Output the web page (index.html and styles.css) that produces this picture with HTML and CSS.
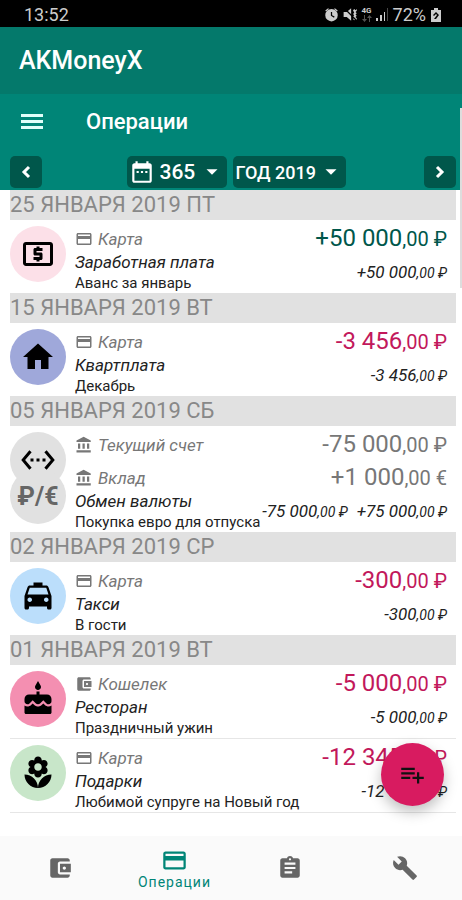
FILE: index.html
```html
<!DOCTYPE html>
<html lang="ru">
<head>
    <meta charset="UTF-8">
    <meta name="viewport" content="width=device-width, initial-scale=1.0">
    <title>AKMoneyX - Операции</title>
    <link rel="stylesheet" href="styles.css">
</head>
<body>
    <!-- общие иконки -->
    <svg class="sprite" aria-hidden="true">
        <symbol id="card" viewBox="0 0 24 24"><path d="M20 4H4c-1.11 0-1.99.89-1.99 2L2 18c0 1.11.89 2 2 2h16c1.11 0 2-.89 2-2V6c0-1.11-.89-2-2-2zm0 14H4v-6h16v6zm0-10H4V6h16v2z"/></symbol>
        <symbol id="bank" viewBox="0 0 24 24"><path d="M4 10v7h3v-7H4zm6 0v7h3v-7h-3zM2 22h19v-3H2v3zm14-12v7h3v-7h-3zm-4.500-9L2 6v2h19V6l-9.500-5z"/></symbol>
        <symbol id="wallet" viewBox="0 0 24 24"><path d="M21 18v1c0 1.100-.9 2-2 2H5c-1.110 0-2-.9-2-2V5c0-1.100.89-2 2-2h14c1.100 0 2 .9 2 2v1h-9c-1.110 0-2 .9-2 2v8c0 1.100.89 2 2 2h9zm-9-2h10V8H12v8zm4-2.500c-.83 0-1.500-.67-1.500-1.500s.67-1.500 1.500-1.500 1.500.67 1.500 1.500-.67 1.500-1.500 1.500z"/></symbol>
        <symbol id="caret" viewBox="0 0 24 24"><path d="M6 9l6 6 6-6z"/></symbol>
    </svg>

    <div class="app">
        <div class="status-bar">
            <span class="clock">13:52</span>
            <div class="status-icons">
                <svg width="15" height="15" viewBox="0 0 24 24"><path d="M22 5.720l-4.600-3.860-1.290 1.530 4.600 3.860L22 5.720zM7.880 3.390L6.600 1.860 2 5.710l1.290 1.530 4.590-3.850z"/><path fill-rule="evenodd" d="M12 3a10 10 0 1 0 0 20 10 10 0 0 0 0-20zm-1 5h2v5l4 2-1 2-5-3z"/></svg>
                <svg width="15" height="15" viewBox="0 0 24 24"><path d="M1 8h5l7-6v20l-7-6H1z"/><path d="M16 5l2-2 2 2 2-2v3l-2 2 2 2-2 2 2 2-2 2 2 2v3l-2-2-2 2-2-2 2-2-2-2 2-2-2-2 2-2z"/><path d="M2 2l20 20" stroke="#000" stroke-width="2"/></svg>
                <span class="network"><b>4G</b><svg width="10" height="7" viewBox="0 0 10 7"><path d="M2 0h1v4h2L2.500 7 0 4h2zM7 7h1V3h2L7.500 0 5 3h2z" opacity=".4"/></svg></span>
                <svg width="13" height="13" viewBox="0 0 13 13"><path d="M0 10h2v3H0zM4 7h2v6H4zM8 4h1v9H8z"/><path d="M11 0h1v13h-1z" opacity=".35"/></svg>
                <span>72%</span>
                <svg width="12" height="14" viewBox="0 0 12 14"><path fill-rule="evenodd" d="M4 0h4v2h3v12H1V2h3zM6 4L3 7l1 1 2-2 1 1-3 4h2l3-4z"/></svg>
            </div>
        </div>

        <header class="app-header">
            <h1>AKMoneyX</h1>
        </header>

        <div class="toolbar">
            <div class="toolbar-title">
                <button class="icon-button" type="button" aria-label="Меню">
                    <svg width="22" height="16" viewBox="0 0 22 16"><path d="M0 0h22v3H0zM0 6h22v3H0zM0 12h22v3H0z"/></svg>
                </button>
                <h2>Операции</h2>
            </div>
            <div class="period">
                <button class="period-button" type="button" aria-label="Назад">
                    <svg width="24" height="24" viewBox="0 0 24 24"><path d="M15 7l-5 5 5 5" fill="none" stroke="#fff" stroke-width="3"/></svg>
                </button>
                <div class="pickers">
                    <label class="picker">
                        <svg width="26" height="26" viewBox="0 0 24 24"><path d="M9 11H7v2h2v-2zm4 0h-2v2h2v-2zm4 0h-2v2h2v-2zm2-7h-1V2h-2v2H8V2H6v2H5c-1.110 0-1.990.9-1.990 2L3 20c0 1.100.89 2 2 2h14c1.100 0 2-.9 2-2V6c0-1.100-.9-2-2-2zm0 16H5V9h14v11z"/></svg>
                        <select class="days" aria-label="Количество дней">
                            <option>365</option>
                        </select>
                        <svg class="caret" width="22" height="22"><use href="#caret"/></svg>
                    </label>
                    <label class="picker">
                        <select class="year" aria-label="Период">
                            <option>ГОД 2019</option>
                        </select>
                        <svg class="caret" width="22" height="22"><use href="#caret"/></svg>
                    </label>
                </div>
                <button class="period-button" type="button" aria-label="Вперед">
                    <svg width="24" height="24" viewBox="0 0 24 24"><path d="M9 7l5 5-5 5" fill="none" stroke="#fff" stroke-width="3"/></svg>
                </button>
            </div>
        </div>

        <main class="operations">
            <h3 class="date">25 ЯНВАРЯ 2019 ПТ</h3>
            <article class="operation">
                <div class="category-icon salary">
                    <svg width="36" height="36" viewBox="0 0 24 24"><path d="M11 17h2v-1h1c.55 0 1-.45 1-1v-3c0-.55-.45-1-1-1h-3v-1h4V8h-2V7h-2v1h-1c-.55 0-1 .45-1 1v3c0 .55.45 1 1 1h3v1H9v2h2v1zm9-13H4c-1.110 0-1.990.89-1.990 2L2 18c0 1.110.89 2 2 2h16c1.110 0 2-.89 2-2V6c0-1.110-.89-2-2-2zm0 14H4V6h16v12z"/></svg>
                </div>
                <div class="details">
                    <div class="account">
                        <svg width="18" height="18"><use href="#card"/></svg>
                        <span class="account-name">Карта</span>
                        <span class="amount income">+50 000<small>,00 ₽</small></span>
                    </div>
                    <div class="summary">
                        <div>
                            <p class="category">Заработная плата</p>
                            <p class="comment">Аванс за январь</p>
                        </div>
                        <p class="total"><span>+50 000<small>,00 ₽</small></span></p>
                    </div>
                </div>
            </article>

            <h3 class="date">15 ЯНВАРЯ 2019 ВТ</h3>
            <article class="operation">
                <div class="category-icon rent">
                    <svg width="36" height="36" viewBox="0 0 24 24"><path d="M10 20v-6h4v6h5v-8h3L12 3 2 12h3v8z"/></svg>
                </div>
                <div class="details">
                    <div class="account">
                        <svg width="18" height="18"><use href="#card"/></svg>
                        <span class="account-name">Карта</span>
                        <span class="amount expense">-3 456<small>,00 ₽</small></span>
                    </div>
                    <div class="summary">
                        <div>
                            <p class="category">Квартплата</p>
                            <p class="comment">Декабрь</p>
                        </div>
                        <p class="total"><span>-3 456<small>,00 ₽</small></span></p>
                    </div>
                </div>
            </article>

            <h3 class="date">05 ЯНВАРЯ 2019 СБ</h3>
            <article class="operation">
                <div class="icon-stack">
                    <div class="category-icon currency">₽/€</div>
                    <div class="category-icon exchange">
                        <svg width="36" height="36" viewBox="0 0 24 24"><path d="M7.770 6.760L6.230 5.480.82 12l5.410 6.520 1.540-1.280L3.420 12l4.350-5.240zM7 13h2v-2H7v2zm10-2h-2v2h2v-2zm-6 2h2v-2h-2v2zm6.770-7.520l-1.540 1.280L20.580 12l-4.350 5.240 1.540 1.280L23.180 12l-5.410-6.520z"/></svg>
                    </div>
                </div>
                <div class="details">
                    <div class="account">
                        <svg width="18" height="18"><use href="#bank"/></svg>
                        <span class="account-name">Текущий счет</span>
                        <span class="amount">-75 000<small>,00 ₽</small></span>
                    </div>
                    <div class="account">
                        <svg width="18" height="18"><use href="#bank"/></svg>
                        <span class="account-name">Вклад</span>
                        <span class="amount">+1 000<small>,00 €</small></span>
                    </div>
                    <div class="summary">
                        <div>
                            <p class="category">Обмен валюты</p>
                            <p class="comment">Покупка евро для отпуска</p>
                        </div>
                        <p class="total"><span>-75 000<small>,00 ₽</small></span> <span>+75 000<small>,00 ₽</small></span></p>
                    </div>
                </div>
            </article>

            <h3 class="date">02 ЯНВАРЯ 2019 СР</h3>
            <article class="operation">
                <div class="category-icon taxi">
                    <svg width="36" height="36" viewBox="0 0 24 24"><path d="M18.920 6.010C18.720 5.420 18.160 5 17.500 5H15V3H9v2H6.500c-.66 0-1.210.42-1.420 1.010L3 12v8c0 .55.45 1 1 1h1c.55 0 1-.45 1-1v-1h12v1c0 .55.45 1 1 1h1c.55 0 1-.45 1-1v-8l-2.080-5.990zM6.500 16c-.83 0-1.500-.67-1.500-1.500S5.670 13 6.500 13s1.500.67 1.500 1.500S7.330 16 6.500 16zm11 0c-.83 0-1.500-.67-1.500-1.500s.67-1.500 1.500-1.500 1.500.67 1.500 1.500-.67 1.500-1.500 1.500zM5 11l1.500-4.500h11L19 11H5z"/></svg>
                </div>
                <div class="details">
                    <div class="account">
                        <svg width="18" height="18"><use href="#card"/></svg>
                        <span class="account-name">Карта</span>
                        <span class="amount expense">-300<small>,00 ₽</small></span>
                    </div>
                    <div class="summary">
                        <div>
                            <p class="category">Такси</p>
                            <p class="comment">В гости</p>
                        </div>
                        <p class="total"><span>-300<small>,00 ₽</small></span></p>
                    </div>
                </div>
            </article>

            <h3 class="date">01 ЯНВАРЯ 2019 ВТ</h3>
            <article class="operation">
                <div class="category-icon restaurant">
                    <svg width="36" height="36" viewBox="0 0 24 24"><path d="M12 6c1.110 0 2-.9 2-2 0-.38-.1-.73-.29-1.030L12 0l-1.710 2.970c-.19.3-.29.65-.29 1.030 0 1.100.9 2 2 2zm4.600 9.990l-1.070-1.070-1.080 1.070c-1.300 1.300-3.580 1.310-4.890 0l-1.070-1.070-1.090 1.070C6.750 16.640 5.880 17 4.960 17c-.73 0-1.400-.23-1.960-.61V21c0 .55.45 1 1 1h16c.55 0 1-.45 1-1v-4.610c-.56.38-1.230.61-1.960.61-.92 0-1.790-.36-2.440-1.010zM18 9h-5V7h-2v2H6c-1.660 0-3 1.340-3 3v1.540c0 1.080.88 1.960 1.960 1.960.52 0 1.020-.2 1.380-.57l2.140-2.130 2.130 2.130c.74.74 2.030.74 2.770 0l2.140-2.130 2.130 2.130c.37.37.86.57 1.380.57 1.080 0 1.960-.88 1.960-1.960V12C21 10.340 19.660 9 18 9z"/></svg>
                </div>
                <div class="details">
                    <div class="account">
                        <svg width="18" height="18"><use href="#wallet"/></svg>
                        <span class="account-name">Кошелек</span>
                        <span class="amount expense">-5 000<small>,00 ₽</small></span>
                    </div>
                    <div class="summary">
                        <div>
                            <p class="category">Ресторан</p>
                            <p class="comment">Праздничный ужин</p>
                        </div>
                        <p class="total"><span>-5 000<small>,00 ₽</small></span></p>
                    </div>
                </div>
            </article>
            <article class="operation divided">
                <div class="category-icon gifts">
                    <svg width="36" height="36" viewBox="0 0 24 24"><path d="M12 22c4.970 0 9-4.030 9-9-4.970 0-9 4.030-9 9zM5.600 10.250c0 1.380 1.120 2.500 2.500 2.500.53 0 1.010-.16 1.420-.44l-.02.19c0 1.380 1.120 2.500 2.500 2.500s2.500-1.120 2.500-2.500l-.02-.19c.4.28.89.44 1.420.44 1.380 0 2.500-1.120 2.500-2.500 0-1-.59-1.850-1.430-2.250.84-.4 1.430-1.250 1.430-2.250 0-1.380-1.120-2.500-2.500-2.500-.53 0-1.010.16-1.420.44l.02-.19C14.500 2.120 13.380 1 12 1S9.500 2.120 9.500 3.500l.02.19c-.4-.28-.89-.44-1.420-.44-1.380 0-2.500 1.120-2.500 2.500 0 1 .59 1.850 1.430 2.250-.84.4-1.430 1.250-1.430 2.250zM12 5.500c1.380 0 2.500 1.120 2.500 2.500s-1.120 2.500-2.500 2.500S9.500 9.380 9.500 8s1.120-2.500 2.500-2.500zM3 13c0 4.970 4.030 9 9 9 0-4.970-4.030-9-9-9z"/></svg>
                </div>
                <div class="details">
                    <div class="account">
                        <svg width="18" height="18"><use href="#card"/></svg>
                        <span class="account-name">Карта</span>
                        <span class="amount expense">-12 345<small>,00 ₽</small></span>
                    </div>
                    <div class="summary">
                        <div>
                            <p class="category">Подарки</p>
                            <p class="comment">Любимой супруге на Новый год</p>
                        </div>
                        <p class="total"><span>-12 345<small>,00 ₽</small></span></p>
                    </div>
                </div>
            </article>
        </main>

        <nav class="bottom-nav">
            <a href="#accounts" aria-label="Счета"><svg width="26" height="26"><use href="#wallet"/></svg></a>
            <a href="#operations" class="active"><svg width="27" height="27"><use href="#card"/></svg><span>Операции</span></a>
            <a href="#reports" aria-label="Отчеты"><svg width="26" height="26" viewBox="0 0 24 24"><path d="M19 3h-4.180C14.400 1.840 13.300 1 12 1c-1.300 0-2.400.84-2.820 2H5c-1.100 0-2 .9-2 2v14c0 1.100.9 2 2 2h14c1.100 0 2-.9 2-2V5c0-1.100-.9-2-2-2zm-7 0c.55 0 1 .45 1 1s-.45 1-1 1-1-.45-1-1 .45-1 1-1zm2 14H7v-2h7v2zm3-4H7v-2h10v2zm0-4H7V7h10v2z"/></svg></a>
            <a href="#settings" aria-label="Настройки"><svg width="26" height="26" viewBox="0 0 24 24"><path d="M22.700 19l-9.100-9.100c.9-2.300.4-5-1.500-6.900-2-2-5-2.400-7.400-1.300L9 6 6 9 1.600 4.700C.4 7.100.9 10.100 2.900 12.100c1.900 1.900 4.600 2.400 6.900 1.500l9.100 9.100c.4.4 1 .4 1.400 0l2.300-2.300c.5-.4.5-1.100.1-1.400z"/></svg></a>
        </nav>

        <button class="add-button" type="button" aria-label="Добавить операцию">
            <svg width="27" height="27" viewBox="0 0 24 24"><path d="M14 10H2v2h12v-2zm0-4H2v2h12V6zm4 8v-4h-2v4h-4v2h4v4h2v-4h4v-2h-4zM2 16h8v-2H2v2z"/></svg>
        </button>
        <div class="scroll-thumb"></div>
    </div>
</body>
</html>
```
FILE: styles.css
```css
* {
    box-sizing: border-box;
    margin: 0;
    padding: 0;
}

body {
    font-family: Roboto, "Noto Sans", sans-serif;
    color: #222;
    background-color: #fff;
}

svg {
    display: block;
    flex: none;
    fill: currentColor;
}

button, select {
    font-family: inherit;
    border: none;
    cursor: pointer;
}

.sprite {
    position: absolute;
    width: 0;
    height: 0;
}

.app {
    position: relative;
    display: flex;
    flex-direction: column;
    min-height: 100vh;
}

/* строка состояния */
.status-bar {
    display: flex;
    align-items: center;
    justify-content: space-between;
    height: 27px;
    padding: 2px 20px 0 24px;
    background-color: #000;
    color: #ccc;
    font-size: 18px;
}

.status-icons {
    display: flex;
    align-items: center;
    gap: 4px;
}

.network {
    display: flex;
    flex-direction: column;
    align-items: center;
    font-size: 8px;
    line-height: 8px;
}

/* шапка */
.app-header {
    padding: 18px 19px;
    background-color: #04796b;
    color: #fff;
}

h1, h2 {
    font-weight: 500;
}

h1 {
    font-size: 25px;
    line-height: 31px;
}

h2 {
    font-size: 22px;
    line-height: 32px;
}

.toolbar {
    padding: 12px 6px 2px 10px;
    background-color: #008577;
    color: #fff;
}

.toolbar-title {
    display: flex;
    align-items: center;
    gap: 43px;
    padding-left: 11px;
    margin-bottom: 18px;
}

.icon-button {
    background: none;
    color: #e0fffa;
}

.period {
    display: flex;
    align-items: center;
}

.period-button {
    display: flex;
    align-items: center;
    justify-content: center;
    width: 32px;
    height: 32px;
    border-radius: 5px;
    background-color: #00574b;
    color: #fff;
}

.pickers {
    display: flex;
    flex: 1;
    justify-content: center;
    gap: 6px;
    padding-left: 6px;
}

.picker {
    display: flex;
    align-items: center;
    height: 32px;
    padding: 0 4px 0 2px;
    border-radius: 5px;
    background-color: #00574b;
}

.picker select {
    appearance: none;
    background: none;
    color: #fff;
    font-weight: 500;
    outline: none;
}

.days {
    padding: 0 5px 0 5px;
    font-size: 21px;
}

.year {
    padding: 0 3px 0 1px;
    font-size: 18px;
}

.caret {
    pointer-events: none;
}

/* список операций */
.operations {
    flex: 1;
    padding: 0 6px 0 10px;
}

.date {
    background-color: #e1e1e1;
    color: #888;
    font-size: 22px;
    font-weight: 400;
    line-height: 30px;
}

.operation {
    display: flex;
    gap: 9px;
    padding-right: 9px;
}

.operation.divided {
    border-top: 1px solid #e6e6e6;
    border-bottom: 1px solid #e6e6e6;
}

.category-icon {
    display: flex;
    flex: none;
    align-items: center;
    justify-content: center;
    width: 56px;
    height: 56px;
    margin-top: 6px;
    border-radius: 50%;
    color: #000;
}

.salary { background-color: #fce0e8; }
.rent { background-color: #9fa8da; }
.taxi { background-color: #bbdefb; }
.restaurant { background-color: #f48fb1; }
.gifts { background-color: #c8e6c9; }

.icon-stack {
    display: flex;
    flex-direction: column-reverse;
    justify-content: flex-end;
}

.exchange, .currency {
    background-color: #e1e1e1;
}

.currency {
    margin-top: -20px;
    color: #666;
    font-size: 25px;
    font-weight: 700;
}

.icon-stack svg {
    z-index: 1;
}

.details {
    flex: 1;
    padding-top: 6px;
}

.account {
    display: flex;
    align-items: center;
    gap: 5px;
    height: 25px;
    color: #777;
    line-height: 24px;
}

.account + .account {
    margin-top: 8px;
}

.account-name {
    font-size: 17px;
    font-style: italic;
}

.amount {
    margin-left: auto;
    font-size: 24px;
}

.amount small {
    font-size: 20px;
}

.income { color: #00574b; }
.expense { color: #c2185b; }

.summary {
    display: flex;
    align-items: center;
    justify-content: space-between;
    white-space: nowrap;
}

.category {
    font-size: 17px;
    font-style: italic;
    line-height: 22px;
}

.comment {
    font-size: 15px;
    line-height: 20px;
}

.total {
    display: flex;
    gap: 9px;
    font-size: 17px;
    font-style: italic;
}

.total small {
    font-size: 14px;
}

/* нижняя навигация */
.bottom-nav {
    display: flex;
    height: 64px;
    padding-left: 2px;
    background-color: #fafafa;
}

.bottom-nav a {
    display: flex;
    flex: 1;
    flex-direction: column;
    align-items: center;
    justify-content: center;
    color: #666;
    font-size: 14px;
    text-decoration: none;
}

.bottom-nav .active {
    color: #008577;
    letter-spacing: 1px;
}

.add-button {
    position: fixed;
    right: 18px;
    bottom: 94px;
    display: flex;
    align-items: center;
    justify-content: center;
    width: 63px;
    height: 63px;
    border-radius: 50%;
    background-color: #d81b60;
    color: #111;
    box-shadow: 0 6px 14px rgba(0, 0, 0, 0.25);
}

.scroll-thumb {
    position: absolute;
    top: 108px;
    right: 0;
    width: 2px;
    height: 180px;
    background-color: #ddd;
}
```
